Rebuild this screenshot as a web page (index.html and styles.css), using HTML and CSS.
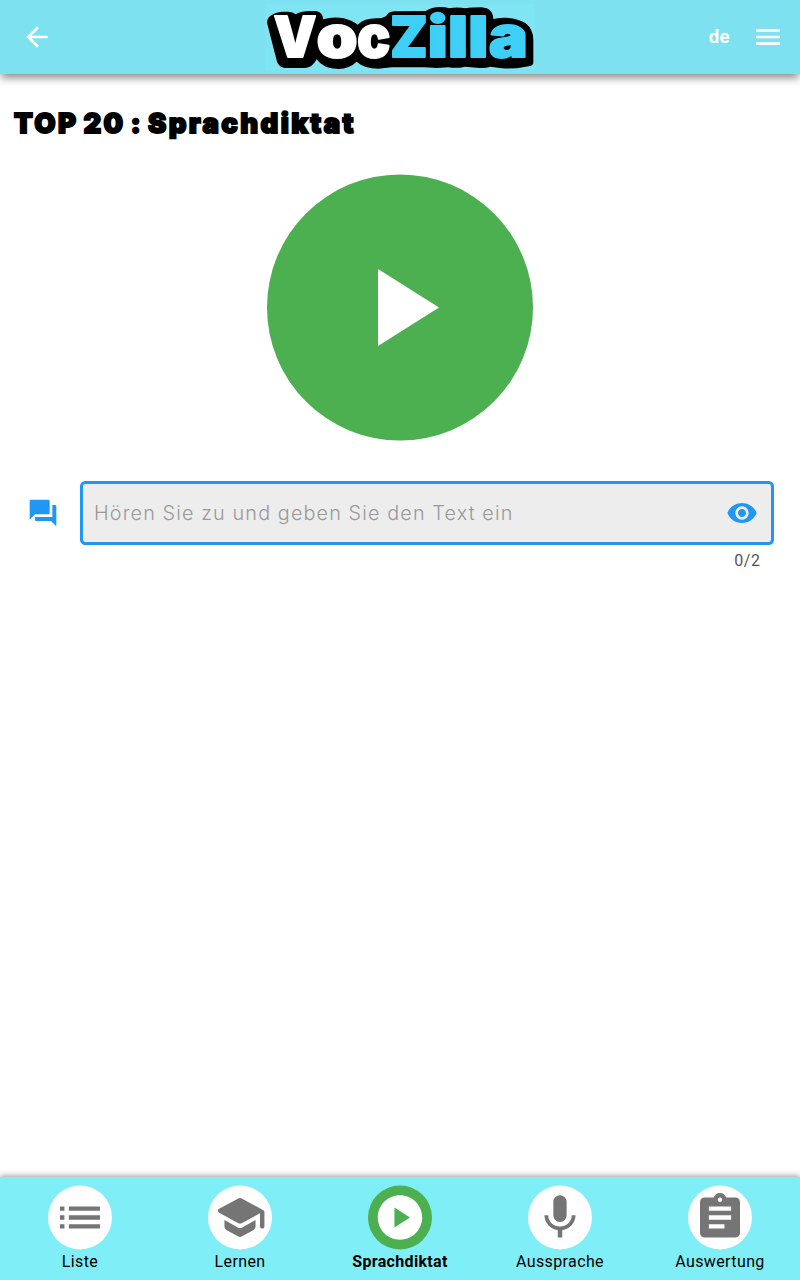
FILE: index.html
```html
<!DOCTYPE html>
<html lang="de">
<head>
<meta charset="utf-8">
<title>VocZilla</title>
<link rel="stylesheet" href="styles.css">
</head>
<body>
<header class="topbar">
  <a class="back" aria-label="Zurück"><svg class="icon-arrow" viewBox="0 0 24 24"><path d="M20 11H7.83l5.59-5.59L12 4l-8 8 8 8 1.41-1.41L7.83 13H20v-2z"/></svg></a>
  <svg class="logo" viewBox="30 12 810 198" role="img" aria-label="VocZilla">
    <path d="M36 68C36 46 60 38 80 35L100 35Q114 36 122 43Q140 33 165 33L183 33Q205 38 204 58Q250 45 290 63Q300 68 308 74Q330 53 370 55Q392 54 398 42Q404 34 420 34L512 33Q530 21 555 21Q572 21 582 25Q605 20 632 25Q648 22 680 22Q714 25 715 57Q775 46 812 70Q835 88 835 120V190Q833 200 812 200Q775 208 740 205L706 200Q690 206 665 203L630 200Q605 206 580 202L545 204L510 202H410L370 206Q328 206 305 185Q285 205 250 207Q205 207 185 178Q172 203 150 204H92Q72 202 66 185Z"/>
    <g class="logo-white">
      <text x="56" y="172" textLength="128" lengthAdjust="spacingAndGlyphs">V</text>
      <text x="185" y="172" textLength="122" lengthAdjust="spacingAndGlyphs">o</text>
      <text x="307" y="172" textLength="99" lengthAdjust="spacingAndGlyphs">c</text>
    </g>
    <g class="logo-blue">
      <text x="406" y="172" textLength="112" lengthAdjust="spacingAndGlyphs">Z</text>
      <text x="518" y="172" textLength="60" lengthAdjust="spacingAndGlyphs">i</text>
      <text x="579" y="172" textLength="60" lengthAdjust="spacingAndGlyphs">l</text>
      <text x="640" y="172" textLength="60" lengthAdjust="spacingAndGlyphs">l</text>
      <text x="702" y="172" textLength="116" lengthAdjust="spacingAndGlyphs">a</text>
    </g>
  </svg>
  <div class="actions">
    <span class="lang">de</span>
    <svg class="icon-menu" viewBox="0 0 24 24"><path d="M3 18h18v-2H3v2zm0-5h18v-2H3v2zm0-7v2h18V6H3z"/></svg>
  </div>
</header>
<main class="content">
  <h1 class="title">TOP 20 : Sprachdiktat</h1>
  <button class="play" aria-label="Abspielen"><svg viewBox="0 0 266 267"><circle cx="133" cy="133.5" r="133"/><path d="M111 95v77l61-38.5z"/></svg></button>
  <div class="entry">
    <svg class="icon-chat" viewBox="0 0 24 24"><path d="M21 6h-2v9H6v2c0 .55.45 1 1 1h11l4 4V7c0-.55-.45-1-1-1zm-4 6V3c0-.55-.45-1-1-1H3c-.55 0-1 .45-1 1v14l4-4h10c.55 0 1-.45 1-1z"/></svg>
    <div class="field">
      <div class="box">
        <span class="hint">Hören Sie zu und geben Sie den Text ein</span>
        <svg class="icon-eye" viewBox="0 0 24 24"><path d="M12 4.5C7 4.5 2.73 7.61 1 12c1.73 4.39 6 7.5 11 7.5s9.27-3.11 11-7.5c-1.73-4.39-6-7.5-11-7.5zM12 17c-2.76 0-5-2.24-5-5s2.24-5 5-5 5 2.24 5 5-2.24 5-5 5zm0-8c-1.66 0-3 1.34-3 3s1.34 3 3 3 3-1.34 3-3-1.34-3-3-3z"/></svg>
      </div>
      <span class="counter">0/2</span>
    </div>
  </div>
</main>
<nav class="tabs">
  <a class="tab"><svg class="disc" viewBox="0 0 64 65"><circle cx="32" cy="32.5" r="32"/><path transform="translate(5.33 5.83) scale(2.222)" d="M3 13h2v-2H3v2zm0 4h2v-2H3v2zm0-8h2V7H3v2zm4 4h14v-2H7v2zm0 4h14v-2H7v2zM7 7v2h14V7H7z"/></svg><span class="label">Liste</span></a>
  <a class="tab"><svg class="disc" viewBox="0 0 64 65"><circle cx="32" cy="32.5" r="32"/><path transform="translate(5.33 5.83) scale(2.222)" d="M5 13.18v2.81c0 .73.4 1.41 1.04 1.76l5 2.73c.6.33 1.32.33 1.92 0l5-2.73c.64-.35 1.04-1.03 1.04-1.76v-2.81l-6.04 3.3c-.6.33-1.32.33-1.92 0L5 13.18zm6.04-9.66l-8.43 4.6c-.69.38-.69 1.38 0 1.76l8.43 4.6c.6.33 1.32.33 1.92 0L21 10.09V16c0 .55.45 1 1 1s1-.45 1-1V9.59c0-.37-.2-.7-.52-.88l-9.52-5.19c-.6-.32-1.32-.32-1.92 0z"/></svg><span class="label">Lernen</span></a>
  <a class="tab active"><svg class="disc" viewBox="0 0 64 65"><circle cx="32" cy="32.5" r="32"/><path transform="translate(5.33 5.83) scale(2.222)" d="M12 2C6.48 2 2 6.48 2 12s4.48 10 10 10 10-4.48 10-10S17.52 2 12 2zM9.5 16.5v-9l7 4.5-7 4.5z"/></svg><span class="label">Sprachdiktat</span></a>
  <a class="tab"><svg class="disc" viewBox="0 0 64 65"><circle cx="32" cy="32.5" r="32"/><path transform="translate(5.33 5.83) scale(2.222)" d="M12 14c1.66 0 2.99-1.34 2.99-3L15 5c0-1.66-1.34-3-3-3S9 3.34 9 5v6c0 1.66 1.34 3 3 3zm5.3-3c0 3-2.54 5.1-5.3 5.1S6.7 14 6.7 11H5c0 3.41 2.72 6.23 6 6.72V21h2v-3.28c3.28-.48 6-3.3 6-6.72h-1.7z"/></svg><span class="label">Aussprache</span></a>
  <a class="tab"><svg class="disc" viewBox="0 0 64 65"><circle cx="32" cy="32.5" r="32"/><path transform="translate(5.33 5.83) scale(2.222)" d="M19 3h-4.18C14.4 1.84 13.3 1 12 1c-1.3 0-2.4.84-2.82 2H5c-1.1 0-2 .9-2 2v14c0 1.1.9 2 2 2h14c1.1 0 2-.9 2-2V5c0-1.1-.9-2-2-2zm-7 0c.55 0 1 .45 1 1s-.45 1-1 1-1-.45-1-1 .45-1 1-1zm2 14H7v-2h7v2zm3-4H7v-2h10v2zm0-4H7V7h10v2z"/></svg><span class="label">Auswertung</span></a>
</nav>
</body>
</html>
```
FILE: styles.css
```css
* { box-sizing: border-box; }
body {
  margin: 0;
  height: 1280px;
  display: flex;
  flex-direction: column;
  background: #fff;
  color: #000;
  font-family: Roboto, "Liberation Sans", sans-serif;
}
svg { display: block; flex: none; }

.topbar {
  height: 74px;
  display: grid;
  grid-template-columns: 1fr 270px 1fr;
  align-items: center;
  padding: 0 20px;
  background: #7de1f0;
  box-shadow: 0 5px 8px -1px rgba(0, 0, 0, .45);
}
.back { padding-left: 1px; }
.icon-menu, .icon-arrow { width: 32px; height: 32px; fill: #fff; }
.logo {
  width: 270px;
  height: 66px;
  overflow: visible;
  background: #80e5f2;
  fill: #000;
}
.logo text {
  font-family: Inter, sans-serif;
  font-weight: 900;
  font-size: 171px;
  stroke-width: 6;
  stroke-linejoin: round;
}
.logo-white { fill: #fff; stroke: #fff; }
.logo-blue { fill: #3dcff5; stroke: #3dcff5; }
.actions {
  display: flex;
  justify-content: flex-end;
  align-items: center;
  gap: 22px;
  margin-right: -4px;
}
.lang { color: #fff; font-size: 18.6px; font-weight: 700; letter-spacing: .4px; }

.content { flex: 1; display: flex; flex-direction: column; }
.title {
  margin: 29px 0 0 14px;
  height: 40px;
  line-height: 40px;
  font-family: Inter, sans-serif;
  font-size: 27.5px;
  font-weight: 900;
  letter-spacing: 2.4px;
  word-spacing: -3px;
  -webkit-text-stroke: 1.8px #000;
  white-space: nowrap;
}
.play {
  align-self: center;
  width: 266px;
  height: 267px;
  margin-top: 31px;
  padding: 0;
  border: 0;
  background: none;
}
.play svg { width: 266px; height: 267px; }
.play circle { fill: #4caf50; }
.play path { fill: #fff; }
.entry { display: flex; padding: 0 26.5px 0 26.5px; margin-top: 40px; }
.icon-chat { width: 32px; height: 32px; margin: 16px 21.5px 0 0; fill: #2196f3; }
.field { flex: 1; display: flex; flex-direction: column; }
.box {
  height: 63.5px;
  display: flex;
  align-items: center;
  justify-content: space-between;
  padding: 0 12.5px 0 11px;
  border: 3px solid #2196f3;
  border-radius: 5.3px;
  background: #ededed;
}
.hint {
  color: #999;
  font-family: Inter, sans-serif;
  font-size: 19.8px;
  font-weight: 300;
  letter-spacing: 1.13px;
  white-space: nowrap;
}
.icon-eye { width: 32px; height: 32px; fill: #2196f3; }
.counter {
  align-self: flex-end;
  margin: 6.5px 13px 0 0;
  color: #555;
  font-size: 16px;
  line-height: 20px;
  letter-spacing: .55px;
}

.tabs {
  height: 103px;
  display: grid;
  grid-template-columns: repeat(5, 1fr);
  padding-top: 8px;
  background: #80eef6;
  box-shadow: 0 -1px 6px rgba(0, 0, 0, .4);
}
.tab { display: flex; flex-direction: column; align-items: center; }
.disc { width: 64px; height: 65px; }
.disc circle { fill: #fff; }
.disc path { fill: #757575; }
.label { margin-top: 2px; font-size: 16px; line-height: 20px; letter-spacing: .38px; }
.active .disc circle { fill: #4caf50; }
.active .disc path { fill: #fff; }
.active .label { font-weight: 700; letter-spacing: .32px; }
```
